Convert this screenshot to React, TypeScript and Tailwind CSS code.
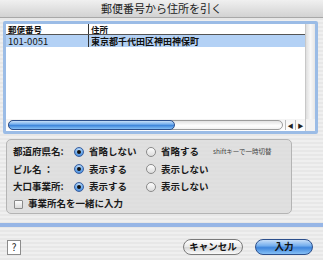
import React, { useState } from 'react';

const font = { fontFamily: '"Noto Sans CJK JP", "Noto Sans", sans-serif' };

type Choice = 'a' | 'b';

const Radio: React.FC<{ on: boolean; label: string; onClick: () => void }> = ({ on, label, onClick }) => (
  <button type="button" onClick={onClick} className="flex items-center gap-[5px] text-[9.5px] font-semibold text-[#1a1a1a] leading-none">
    {on ? (
      <span className="w-[10px] h-[10px] rounded-full border border-[#3a5f9e] bg-[radial-gradient(circle_at_50%_30%,#d4e8fb_0%,#6aa8ea_55%,#2f74d0_100%)] flex items-center justify-center">
        <span className="w-[4px] h-[4px] rounded-full bg-[#111]" />
      </span>
    ) : (
      <span className="w-[10px] h-[10px] rounded-full border border-[#8a8a8a] bg-[linear-gradient(180deg,#fdfdfd,#dcdcdc)]" />
    )}
    <span>{label}</span>
  </button>
);

const Row: React.FC<{ label: string; a: string; b: string; value: Choice; onChange: (v: Choice) => void; note?: string }> = ({ label, a, b, value, onChange, note }) => (
  <div className="flex items-center h-[17.5px]">
    <span className="w-[61px] text-[9.5px] font-semibold text-[#1a1a1a] leading-none whitespace-pre">{label}</span>
    <div className="w-[72px]">
      <Radio on={value === 'a'} label={a} onClick={() => onChange('a')} />
    </div>
    <div className="w-[67px]">
      <Radio on={value === 'b'} label={b} onClick={() => onChange('b')} />
    </div>
    {note && <span className="text-[6.5px] text-[#444] leading-none -mt-[1px]">{note}</span>}
  </div>
);

export default function App() {
  const [pref, setPref] = useState<Choice>('a');
  const [bldg, setBldg] = useState<Choice>('a');
  const [large, setLarge] = useState<Choice>('a');
  const [together, setTogether] = useState(false);

  return (
    <div
      style={font}
      className="w-[323px] h-[260px] overflow-hidden flex flex-col bg-[repeating-linear-gradient(180deg,#efefef_0px,#efefef_2px,#e7e7e7_2px,#e7e7e7_4px)]"
    >
      {/* タイトルバー */}
      <div className="h-[18px] shrink-0 flex items-center justify-center border-b border-[#a8a8a8] bg-[linear-gradient(180deg,#f0f0f0,#d2d2d2)]">
        <span className="text-[11px] text-[#222] leading-none">郵便番号から住所を引く</span>
      </div>

      {/* リスト */}
      <div className="mt-[3px] mx-[3px] w-[315px] h-[113px] shrink-0 border-[3px] border-[#9bbce6] rounded-[2px] flex bg-white">
        <div className="flex-1 flex flex-col">
          <div className="h-[11px] flex border-b border-[#555] text-[8.5px] font-semibold leading-[10px] text-[#111] overflow-hidden">
            <div className="w-[83px] pl-[2px] flex items-center border-r border-[#333]">郵便番号</div>
            <div className="flex-1 pl-[2px] flex items-center">住所</div>
          </div>
          <div className="h-[12px] flex bg-[#b3d1f5] text-[9px] leading-[11px] text-[#111] overflow-hidden">
            <div className="w-[83px] pl-[2px] flex items-center border-r border-[#333] text-[9.5px]">101-0051</div>
            <div className="flex-1 pl-[2px] flex items-center font-semibold">東京都千代田区神田神保町</div>
          </div>
          <div className="flex-1" />
          {/* 横スクロールバー */}
          <div className="h-[12px] flex items-center pl-[2px] bg-[linear-gradient(180deg,#f4f4f4,#ffffff)]">
            <div className="w-[275px] h-[10px] rounded-full border border-[#9c9c9c] bg-[linear-gradient(180deg,#e2e2e2,#ffffff_60%,#f0f0f0)] flex items-center">
              <div className="w-[167px] h-[10px] -ml-[1px] rounded-full border border-[#2c4f8c] bg-[linear-gradient(180deg,#c6def8_0%,#77b0ee_40%,#3f86dc_55%,#86c0f6_100%)]" />
            </div>
            <div className="ml-[2px] w-[10px] h-[10px] flex items-center justify-center border-l border-[#bbb] text-[6px] text-[#222]">◀</div>
            <div className="w-[10px] h-[10px] flex items-center justify-center border-l border-[#bbb] text-[6px] text-[#222]">▶</div>
          </div>
        </div>
        {/* 縦スクロールバー */}
        <div className="w-[10px] flex flex-col border-l border-[#c8c8c8]">
          <div className="flex-1 bg-[linear-gradient(90deg,#dedede,#f8f8f8_50%,#e6e6e6)]" />
          <div className="h-[12px] bg-[#f2f2f2]" />
        </div>
      </div>

      {/* オプション */}
      <div className="mt-[5px] ml-[6px] w-[286px] h-[75px] shrink-0 rounded-[5px] border border-[#b4b4b4] bg-[#dcdcdc]/80 pl-[6px] pt-[3px] flex flex-col">
        <Row label="都道府県名:" a="省略しない" b="省略する" value={pref} onChange={setPref} note="shiftキーで一時切替" />
        <Row label="ビル名 ：" a="表示する" b="表示しない" value={bldg} onChange={setBldg} />
        <Row label="大口事業所:" a="表示する" b="表示しない" value={large} onChange={setLarge} />
        <button type="button" onClick={() => setTogether(!together)} className="flex items-center gap-[5px] h-[17px] pl-[1px] text-[9.5px] font-semibold text-[#1a1a1a] leading-none">
          <span className="w-[9px] h-[9px] border border-[#8a8a8a] rounded-[1px] bg-[linear-gradient(180deg,#fdfdfd,#dadada)] flex items-center justify-center text-[8px]">
            {together ? '✓' : ''}
          </span>
          事業所名を一緒に入力
        </button>
      </div>

      {/* 区切り */}
      <div className="mt-[9px] h-[4px] shrink-0 bg-[#97b6e6]" />

      {/* ボタン */}
      <div className="flex items-center mt-[12px] pl-[7px] pr-[10px]">
        <button type="button" className="w-[14px] h-[15px] border border-[#8c8c8c] bg-white text-[10px] leading-none text-[#222] flex items-center justify-center">?</button>
        <div className="flex-1" />
        <button type="button" className="w-[60px] h-[16px] rounded-full border border-[#7a7a7a] bg-[linear-gradient(180deg,#ffffff,#e8e8e8_50%,#d6d6d6_51%,#fafafa)] text-[9.5px] font-semibold leading-none text-[#111]">
          キャンセル
        </button>
        <button type="button" className="ml-[12px] w-[58px] h-[16px] rounded-full border border-[#2c4f8c] bg-[linear-gradient(180deg,#c6def8_0%,#77b0ee_40%,#3f86dc_55%,#86c0f6_100%)] text-[9.5px] font-semibold leading-none text-[#111]">
          入力
        </button>
      </div>
    </div>
  );
}
